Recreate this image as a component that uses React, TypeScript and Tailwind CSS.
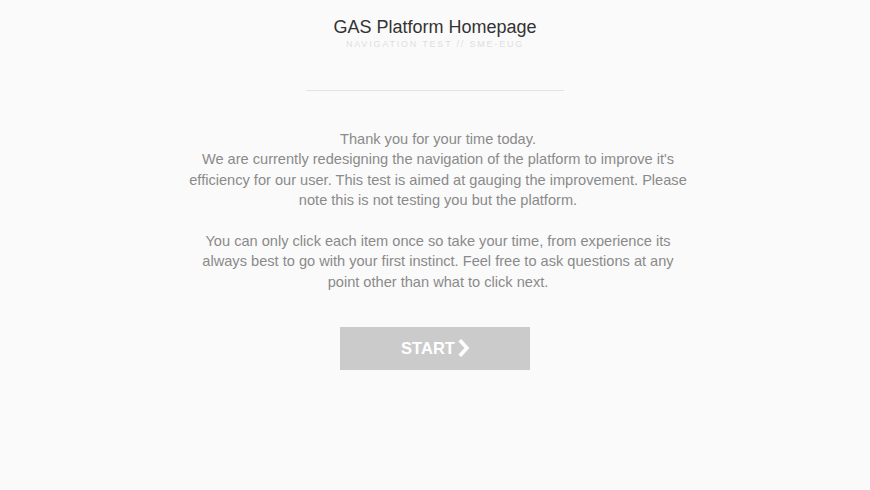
import React from 'react';

export default function App() {
    return (
        <main className="flex min-h-screen flex-col items-center bg-[#fafafa] font-['Liberation_Sans',Arial,sans-serif]">
            <header className="flex flex-col items-center pt-[16px]">
                <h1 className="text-[18px] leading-[22px] text-[#333]">GAS Platform Homepage</h1>
                <p className="mt-[1px] text-[9px] leading-[11px] tracking-[1.8px] text-[#dedede]">
                    NAVIGATION TEST // SME-EUG
                </p>
            </header>

            <hr className="mt-[40px] w-[258px] border-0 border-t border-[#e3e3e3]" />

            <section className="ml-[6px] mt-[38px] w-[506px] text-center text-[14.6px] leading-[20.4px] text-[#8a8a8a]">
                <p>
                    Thank you for your time today.
                    <br />
                    We are currently redesigning the navigation of the platform to improve it's efficiency for
                    our user. This test is aimed at gauging the improvement. Please note this is not testing
                    you but the platform.
                </p>
                <p className="mt-[20.4px]">
                    You can only click each item once so take your time, from experience its always best to go
                    with your first instinct. Feel free to ask questions at any point other than what to click
                    next.
                </p>
            </section>

            <button className="mt-[35px] flex h-[43px] w-[190px] items-center justify-center gap-[2px] bg-[#cbcbcb] pl-[2px] text-[16.5px] font-bold text-white">
                START
                <svg width="14" height="18" viewBox="0 0 14 18" fill="none" className="-mt-[2px]">
                    <path d="M4 2.5l6 6.5-6 6.5" stroke="white" strokeWidth="3.6" strokeLinecap="square" />
                </svg>
            </button>
        </main>
    );
}
